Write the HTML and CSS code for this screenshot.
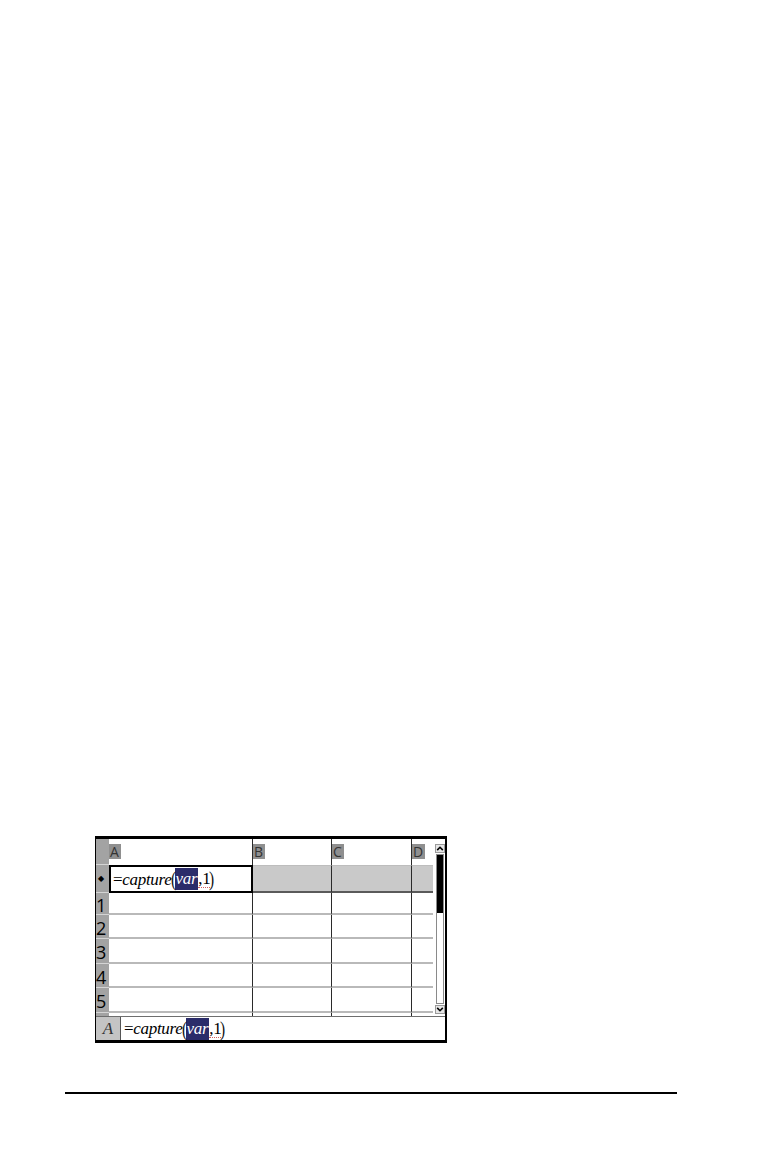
FILE: index.html
```html
<!DOCTYPE html>
<html>
<head>
<meta charset="utf-8">
<link rel="stylesheet" href="styles.css">
</head>
<body>
<div class="page">
  <div class="sheet">
    <div class="grid">
      <div class="main">
        <div class="row hdr">
          <div class="rh"></div>
          <div class="c ca"><span class="lbl">A</span></div>
          <div class="c cb"><span class="lbl">B</span></div>
          <div class="c cc"><span class="lbl">C</span></div>
          <div class="c cd"><span class="lbl">D</span></div>
        </div>
        <div class="row frm">
          <div class="rh"><span class="dia">◆</span></div>
          <div class="c ca edit"><span class="f"><span class="up">=</span><i>capture</i><span class="par">(</span><span class="sel"><i>var</i></span><span class="cur">,1</span><span class="par">)</span></span></div>
          <div class="c cb"></div>
          <div class="c cc"></div>
          <div class="c cd"></div>
        </div>
        <div class="row r1">
          <div class="rh"><span class="num">1</span></div>
          <div class="c ca"></div><div class="c cb"></div><div class="c cc"></div><div class="c cd"></div>
        </div>
        <div class="row r2">
          <div class="rh"><span class="num">2</span></div>
          <div class="c ca"></div><div class="c cb"></div><div class="c cc"></div><div class="c cd"></div>
        </div>
        <div class="row r3">
          <div class="rh"><span class="num">3</span></div>
          <div class="c ca"></div><div class="c cb"></div><div class="c cc"></div><div class="c cd"></div>
        </div>
        <div class="row r4">
          <div class="rh"><span class="num">4</span></div>
          <div class="c ca"></div><div class="c cb"></div><div class="c cc"></div><div class="c cd"></div>
        </div>
        <div class="row r5">
          <div class="rh"><span class="num">5</span></div>
          <div class="c ca"></div><div class="c cb"></div><div class="c cc"></div><div class="c cd"></div>
        </div>
        <div class="row rp">
          <div class="rh"></div>
          <div class="c ca"></div><div class="c cb"></div><div class="c cc"></div><div class="c cd"></div>
        </div>
      </div>
      <div class="scroll">
        <div class="arrow">
          <svg width="10" height="8" viewBox="0 0 10 8"><path d="M1.5 6 L5 2.5 L8.5 6" fill="none" stroke="#000" stroke-width="2"/></svg>
        </div>
        <div class="track"><div class="thumb"></div></div>
        <div class="arrow">
          <svg width="10" height="8" viewBox="0 0 10 8"><path d="M1.5 2 L5 5.5 L8.5 2" fill="none" stroke="#000" stroke-width="2"/></svg>
        </div>
      </div>
    </div>
    <div class="entry">
      <div class="ename"><i>A</i></div>
      <div class="einput"><span class="f"><span class="up">=</span><i>capture</i><span class="par">(</span><span class="sel"><i>var</i></span><span class="cur">,1</span><span class="par">)</span></span></div>
    </div>
  </div>
  <div class="rule"></div>
</div>
</body>
</html>
```

FILE: styles.css
```css
html, body {
  margin: 0;
  padding: 0;
  background: #fff;
}

.page {
  width: 764px;
  height: 1160px;
  padding-top: 836px;
  box-sizing: border-box;
}

.sheet {
  margin-left: 95px;
  width: 352px;
  height: 207px;
  box-sizing: border-box;
  border-top: 3px solid #000;
  border-left: 1px solid #000;
  border-right: 2px solid #000;
  border-bottom: 3px solid #000;
  display: flex;
  flex-direction: column;
  background: #fff;
}

.grid {
  display: flex;
  height: 177px;
}

.main {
  width: 337px;
  display: flex;
  flex-direction: column;
}

.row {
  display: flex;
  box-sizing: border-box;
}

.hdr { height: 26px; }
.frm { height: 28px; }
.r1 { height: 22px; }
.r2 { height: 24px; }
.r3 { height: 25px; }
.r4 { height: 24px; }
.r5 { height: 25px; }
.rp { height: 3px; }

.rh {
  width: 13px;
  flex: none;
  background: #a3a3a3;
  box-sizing: border-box;
  border-bottom: 1px solid #d4d4d4;
  display: flex;
  align-items: center;
  overflow: hidden;
}

.rp .rh { border-bottom: none; }

.c {
  flex: none;
  box-sizing: border-box;
  border-right: 1px solid #2a2a2a;
  position: relative;
}

.ca { width: 144px; }
.cb { width: 79px; }
.cc { width: 80px; }
.cd { width: 21px; border-right: none; }

.r1 .c, .r2 .c, .r3 .c, .r4 .c, .r5 .c {
  border-bottom: 2px solid #b9b9b9;
}

.hdr .c { padding-top: 4px; }

.lbl {
  display: inline-block;
  background: #8f8f8f;
  color: #333;
  font-family: "Open Sans", "DejaVu Sans", sans-serif;
  font-size: 14px;
  line-height: 15px;
  height: 15px;
  padding: 0 2px 0 1px;
}

.frm .cb, .frm .cc, .frm .cd {
  background: #c9c9c9;
  border-bottom: 2px solid #5a5a5a;
  border-top: 1px solid #bdbdbd;
}

.frm .ca.edit {
  border: 2px solid #000;
  display: flex;
  align-items: center;
  padding-left: 2px;
}

.dia {
  font-size: 8px;
  color: #000;
  margin-left: 2px;
  line-height: 1;
}

.num {
  font-family: "Open Sans", "DejaVu Sans", sans-serif;
  font-size: 18px;
  color: #000;
  line-height: 1;
  margin-left: 0;
  margin-top: 2px;
}

.f {
  font-family: "Liberation Serif", "Times New Roman", serif;
  font-size: 17px;
  color: #000;
  white-space: nowrap;
  display: inline-flex;
  align-items: center;
  line-height: 1;
  letter-spacing: -0.3px;
}

.f i { font-style: italic; }

.par {
  font-size: 22px;
  transform: scaleX(0.7);
  display: inline-block;
  color: #111;
  line-height: 1;
  margin: 0 -2px;
}

.sel {
  background: #2b2c6a;
  color: #fff;
  padding: 2px 1px 3px 1px;
}

.cur {
  border-bottom: 1px dotted #d06060;
  padding-left: 0;
}

.scroll {
  width: 12px;
  display: flex;
  flex-direction: column;
  align-items: center;
  padding-top: 5px;
  box-sizing: border-box;
}

.arrow {
  width: 10px;
  height: 9px;
  background: #e6e6e6;
  border: 1px solid #9a9a9a;
  box-sizing: border-box;
  display: flex;
  align-items: center;
  justify-content: center;
  margin-left: 1px;
}

.arrow svg { width: 8px; height: 7px; }

.track {
  width: 8px;
  height: 150px;
  margin: 1px 0 1px 1px;
  border: 1px solid #8a8a8a;
  box-sizing: border-box;
  background: #fff;
}

.thumb {
  height: 58px;
  background: #000;
}

.entry {
  height: 24px;
  display: flex;
  border-top: 1px solid #6e6e6e;
  box-sizing: border-box;
}

.ename {
  width: 24px;
  flex: none;
  background: #c4c4c4;
  border-right: 1px solid #555;
  display: flex;
  align-items: center;
  justify-content: center;
  font-family: "Liberation Serif", "Times New Roman", serif;
  font-size: 17px;
  color: #333;
}

.einput {
  flex: 1;
  display: flex;
  align-items: center;
  padding-left: 3px;
}

.rule {
  margin-top: 49px;
  margin-left: 65px;
  width: 612px;
  height: 2px;
  background: #000;
}
```
